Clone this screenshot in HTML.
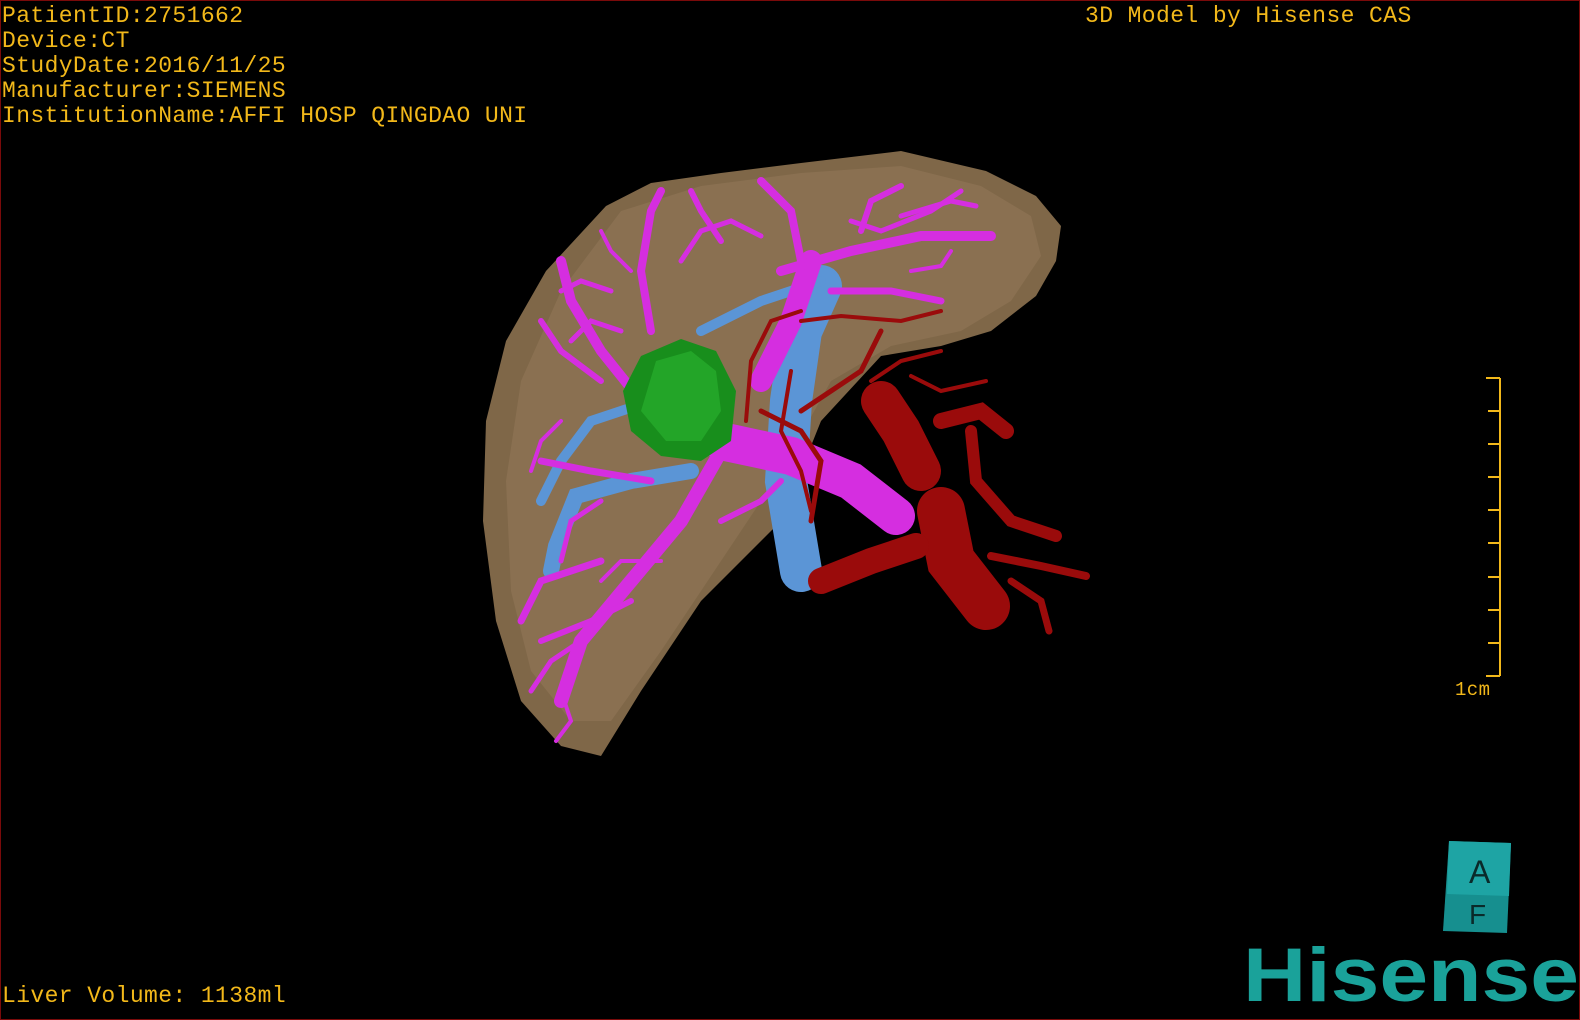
<!DOCTYPE html>
<html><head><meta charset="utf-8"><style>
html,body{margin:0;padding:0;background:#000;}
#c{position:relative;width:1578px;height:1018px;border:1px solid #7a0a0a;background:#000;overflow:hidden;font-family:"Liberation Mono",monospace;color:#f2b81a;}
.t{position:absolute;font-size:23px;line-height:25px;white-space:pre;letter-spacing:0.4px;}
</style></head><body><div id="c">
<div class="t" style="left:1px;top:3px">PatientID:2751662
Device:CT
StudyDate:2016/11/25
Manufacturer:SIEMENS
InstitutionName:AFFI HOSP QINGDAO UNI</div>
<div class="t" style="left:1084px;top:3px">3D Model by Hisense CAS</div>
<div class="t" style="left:1px;top:983px">Liver Volume: 1138ml</div>
<div class="t" style="left:1454px;top:677px;font-size:19px">1cm</div>
<svg width="1578" height="1018" style="position:absolute;left:0;top:0">
<g stroke="#f2b81a" stroke-width="2" fill="none">
<path d="M1499 377V675M1485 377H1499M1485 675H1499"/>
<path d="M1487 410H1499M1487 443H1499M1487 476H1499M1487 509H1499M1487 542H1499M1487 576H1499M1487 609H1499M1487 642H1499"/>
</g>
<path d="M605 205 L650 182 L720 172 L800 162 L900 150 L985 170 L1035 195 L1060 225 L1055 260 L1035 295 L990 330 L940 345 L880 355 L820 420 L780 520 L700 600 L640 690 L600 755 L560 745 L520 700 L495 620 L482 520 L485 420 L505 340 L545 270 Z" fill="#7f6748"/>
<path d="M620 210 L700 185 L800 172 L900 165 L980 185 L1030 215 L1040 255 L1010 300 L960 330 L890 345 L830 380 L780 470 L720 560 L660 650 L610 720 L570 720 L530 670 L510 590 L505 480 L520 380 L560 290 Z" fill="#917658" opacity="0.6"/>
<g stroke="#5b95d6" fill="none" stroke-linecap="round">
<path d="M800 570 L785 480 L790 400 L800 330 L820 285" stroke-width="42"/>
<path d="M690 470 L630 480 L575 495 L555 545 L550 570" stroke-width="16"/>
<path d="M650 400 L590 420 L560 460 L540 500" stroke-width="10"/>
<path d="M700 330 L760 300 L820 280" stroke-width="10"/>
</g>
<g stroke="#d52ee0" fill="none" stroke-linecap="round">
<path d="M720 440 L790 455 L850 480 L895 515" stroke-width="38"/>
<path d="M760 380 L790 320 L810 260" stroke-width="22"/>
<path d="M720 450 L680 520 L630 580 L580 640 L560 700" stroke-width="14"/>
<path d="M700 440 L640 400 L600 350 L570 300 L560 260" stroke-width="10"/>
<path d="M780 270 L850 250 L920 235 L990 235" stroke-width="10"/>
<path d="M800 260 L790 210 L760 180" stroke-width="8"/>
<path d="M650 330 L640 270 L650 210 L660 190" stroke-width="8"/>
<path d="M830 290 L890 290 L940 300" stroke-width="7"/>
<path d="M600 560 L540 580 L520 620" stroke-width="7"/>
<path d="M650 480 L590 470 L540 460" stroke-width="7"/>
<path d="M600 380 L560 350 L540 320" stroke-width="6"/>
<path d="M720 240 L700 210 L690 190" stroke-width="6"/>
<path d="M860 230 L870 200 L900 185" stroke-width="6"/>
<path d="M630 600 L590 620 L540 640" stroke-width="6"/>
<path d="M720 520 L760 500 L780 480" stroke-width="6"/>
<path d="M610 290 L580 280 L560 290" stroke-width="5"/>
<path d="M900 215 L950 200 L975 205" stroke-width="5"/>
<path d="M580 640 L550 660 L530 690" stroke-width="5"/>
<path d="M680 260 L700 230 L730 220 L760 235" stroke-width="5"/>
<path d="M620 330 L590 320 L570 340" stroke-width="5"/>
<path d="M560 420 L540 440 L530 470" stroke-width="4"/>
<path d="M600 500 L570 520 L560 560" stroke-width="5"/>
<path d="M660 560 L620 560 L600 580" stroke-width="4"/>
<path d="M850 220 L880 230 L930 210 L960 190" stroke-width="5"/>
<path d="M910 270 L940 265 L950 250" stroke-width="4"/>
<path d="M560 690 L570 720 L555 740" stroke-width="4"/>
<path d="M630 270 L610 250 L600 230" stroke-width="4"/>
</g>
<path d="M640 355 L680 338 L715 350 L735 390 L730 440 L700 460 L660 455 L630 430 L622 390 Z" fill="#188e1c"/>
<path d="M655 360 L690 350 L715 370 L720 410 L700 440 L665 440 L640 410 Z" fill="#23a528"/>
<g stroke="#9a0b0b" fill="none" stroke-linecap="round">
<path d="M940 510 L950 560 L985 605" stroke-width="48"/>
<path d="M880 400 L900 430 L920 470" stroke-width="40"/>
<path d="M820 580 L870 560 L915 545" stroke-width="26"/>
<path d="M940 420 L980 410 L1005 430" stroke-width="16"/>
<path d="M970 430 L975 480 L1010 520 L1055 535" stroke-width="12"/>
<path d="M990 555 L1040 565 L1085 575" stroke-width="8"/>
<path d="M1010 580 L1040 600 L1048 630" stroke-width="7"/>
<path d="M760 410 L800 430 L820 460 L810 520" stroke-width="5"/>
<path d="M745 420 L750 360 L770 320 L800 310" stroke-width="4"/>
<path d="M800 410 L830 390 L860 370 L880 330" stroke-width="5"/>
<path d="M870 380 L900 360 L940 350" stroke-width="4"/>
<path d="M910 375 L940 390 L985 380" stroke-width="4"/>
<path d="M800 320 L840 315 L900 320 L940 310" stroke-width="4"/>
<path d="M790 370 L780 430 L800 470 L810 510" stroke-width="4"/>
</g>
<polygon points="1448,840 1510,842 1506,932 1442,930" fill="#168f8f"/>
<polygon points="1448,840 1510,842 1508,895 1446,893" fill="#1ea4a4"/>
<text x="1468" y="882" font-family="Liberation Sans,sans-serif" font-size="32" fill="#0a2a2a">A</text>
<text x="1468" y="923" font-family="Liberation Sans,sans-serif" font-size="28" fill="#0a2a2a">F</text>
<text x="1242" y="1000" font-family="Liberation Sans,sans-serif" font-weight="bold" font-size="76" fill="#1aa29a" textLength="336" lengthAdjust="spacingAndGlyphs">Hisense</text>
</svg>
</div></body></html>
